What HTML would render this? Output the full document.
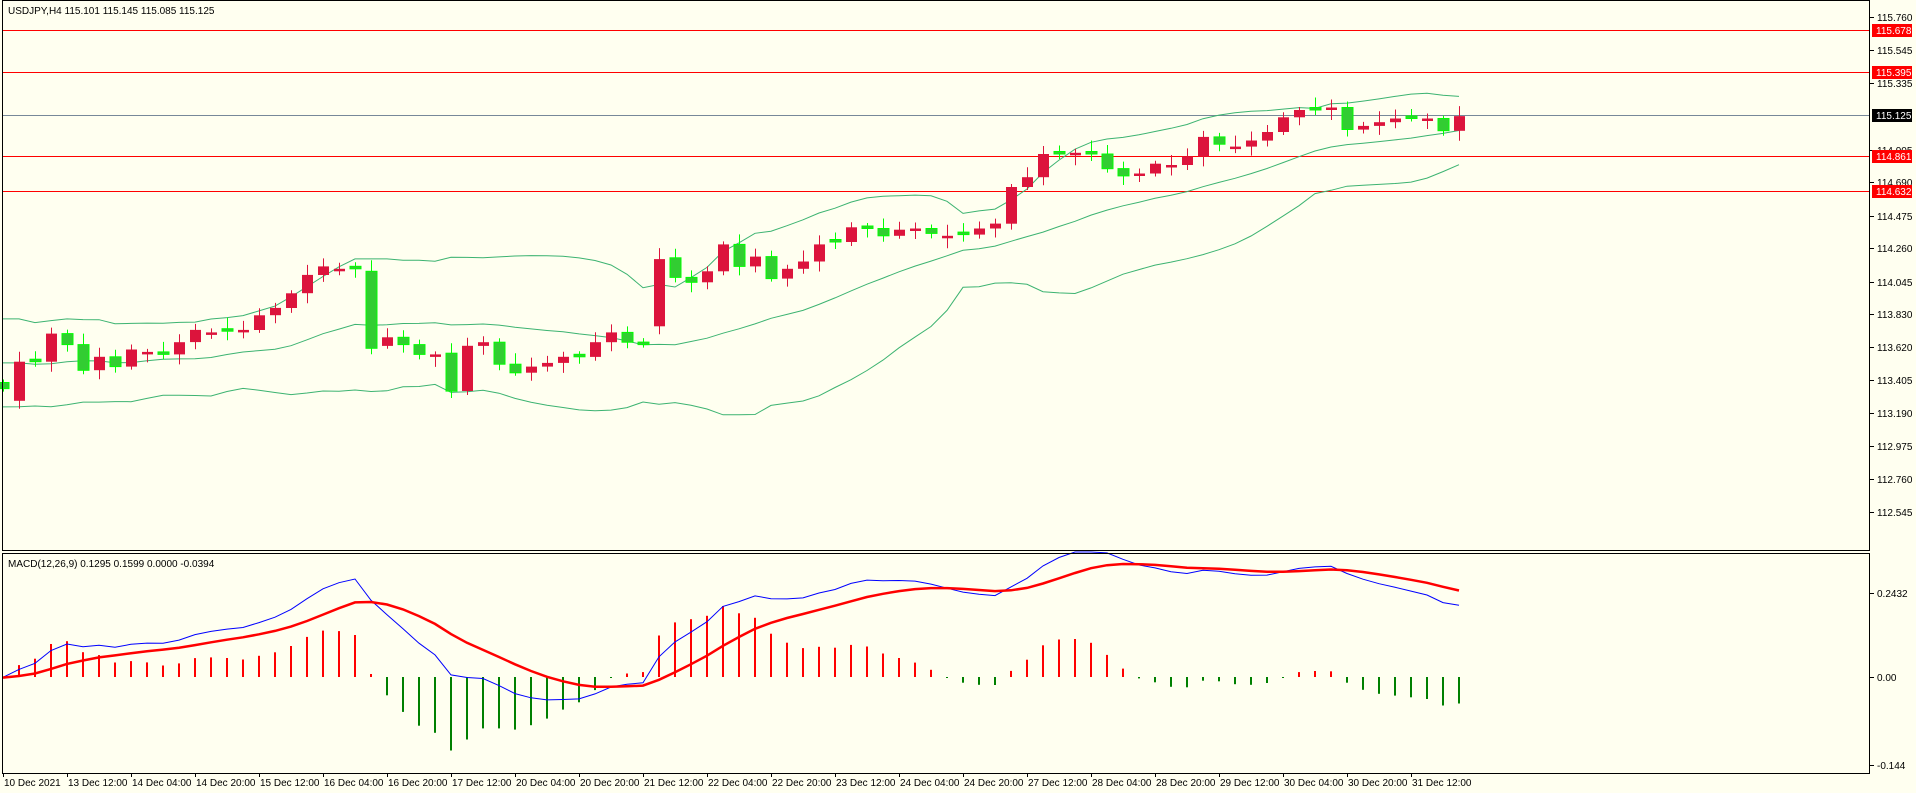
<!DOCTYPE html>
<html><head><meta charset="utf-8"><style>
html,body{margin:0;padding:0;background:#fffff0;width:1916px;height:793px;overflow:hidden}
svg{display:block}
text{font-family:"Liberation Sans",sans-serif;font-size:10px;fill:#000}
</style></head><body>
<svg id="s" width="1916" height="793" xmlns="http://www.w3.org/2000/svg">
<rect x="0" y="0" width="1916" height="793" fill="#fffff0"/>
<g id="g"></g>
<rect x="2.5" y="0.5" width="1867" height="550" fill="none" stroke="#000"/>
<rect x="2.5" y="553.5" width="1867" height="220" fill="none" stroke="#000"/>
<text x="8" y="14">USDJPY,H4  115.101 115.145 115.085 115.125</text>
<text x="8" y="567">MACD(12,26,9) 0.1295 0.1599 0.0000 -0.0394</text>
</svg>
<script>
(function(){
var g=document.getElementById('g');var h='';
function P(p){return 17+(115.76-p)*154;}
function Y(y){return y*1.222;}
var d=[318,296,296,273,282,303,292,300,286,288,290,280,270,272,271,270,258,252,240,225,218,220,220,285,276,282,290,290,320,283,280,298,305,300,297,292,292,280,272,280,282,212,227,231,222,200,218,210,228,220,214,200,198,186,187,193,188,187,191,193,192,187,183,153,145,126,126,125,126,138,144,142,134,135,128,112,118,120,115,108,96,90,90,88,106,103,100,97,97,97,107,95];
var op={0:313,1:328,23:222,24:283,28:289,29:320,41:267,42:211,63:183,84:88};
var cl=[],o=[];
for(var i=0;i<d.length;i++){var c=Y(d[i]);var oo=(op[i]!==undefined)?Y(op[i]):(i?cl[i-1]:c);if(Math.abs(oo-c)<3)oo=c+(i%2?2.5:-2.5);cl.push(c);o.push(oo);}
[30,72,156,191].forEach(function(a){h+='<line x1="3" x2="1870" y1="'+(a+.5)+'" y2="'+(a+.5)+'" stroke="#ff0000"/>';});
h+='<line x1="3" x2="1870" y1="115.5" y2="115.5" stroke="#778899"/>';
var pr=cl.map(function(y){return 115.76-(y-17)/154;});
var up=[],mid=[],lo=[];
var ext=[];for(var k=0;k<19;k++)ext.push(113.52+0.2*Math.sin(k*1.3));
var all=ext.concat(pr);
for(var i=0;i<pr.length;i++){var s=0,j;for(j=0;j<20;j++)s+=all[i+19-j];var m=s/20,v=0;for(j=0;j<20;j++)v+=Math.pow(all[i+19-j]-m,2);var sd=Math.sqrt(v/20);mid.push(m);up.push(m+2*sd);lo.push(m-2*sd);}
function poly(a,c){var s='';for(var i=0;i<a.length;i++)s+=(3+16*i)+','+P(a[i]).toFixed(1)+' ';return '<polyline points="'+s+'" fill="none" stroke="'+c+'" stroke-width="1"/>';}
h+=poly(up,'#3cb371')+poly(mid,'#3cb371')+poly(lo,'#3cb371');
for(var i=0;i<cl.length;i++){var x=3+16*i,c=cl[i],oo=o[i];var tp=Math.min(c,oo),bt=Math.max(c,oo);var bull=c<oo;var col=bull?'#dc143c':'#32cd32';var wc=bull?'#dc143c':'#00ff00';
var wt=tp-3-((i*7)%9),wb=bt+3+((i*5)%8);
h+='<line x1="'+(x+.5)+'" x2="'+(x+.5)+'" y1="'+wt.toFixed(1)+'" y2="'+wb.toFixed(1)+'" stroke="'+wc+'"/>';
h+='<rect x="'+(x-5)+'" y="'+tp.toFixed(1)+'" width="11" height="'+Math.max(2,bt-tp).toFixed(1)+'" fill="'+col+'"'+(bull?'':' stroke="#00ff00"')+'/>';}
var e12=pr[0],e26=pr[0],mac=[],sig=[],sg=null;
var warm=[];for(var k=0;k<40;k++)warm.push(pr[0]+0.01*Math.sin(k/3));
var seq=warm.concat(pr);
for(var i=0;i<seq.length;i++){e12+=(seq[i]-e12)*2/13;e26+=(seq[i]-e26)*2/27;var mm=e12-e26;sg=(sg===null)?mm:sg+(mm-sg)*2/10;if(i>=40){mac.push(mm);sig.push(sg);}}
function MY(v){return 677-v*560;}
for(var i=0;i<mac.length;i++){var x=3+16*i,dv=(mac[i]-sig[i])*1.8;var y=Math.min(770,MY(dv));h+='<rect x="'+(x-1)+'" y="'+Math.min(y,677).toFixed(1)+'" width="2" height="'+Math.max(1,Math.abs(677-y)).toFixed(1)+'" fill="'+(dv>=0?'#ff0000':'#008000')+'"/>';}
function mpoly(a,c,w){var s='';for(var i=0;i<a.length;i++)s+=(3+16*i)+','+Math.max(552,MY(a[i])).toFixed(1)+' ';return '<polyline points="'+s+'" fill="none" stroke="'+c+'" stroke-width="'+w+'"/>';}
h+=mpoly(mac,'#0000ff',1)+mpoly(sig,'#ff0000',2.5);
var ax=[[17,'115.760'],[50,'115.545'],[83,'115.335'],[150,'114.905'],[182,'114.690'],[216,'114.475'],[248,'114.260'],[282,'114.045'],[314,'113.830'],[347,'113.620'],[380,'113.405'],[413,'113.190'],[446,'112.975'],[479,'112.760'],[512,'112.545']];
ax.forEach(function(a){h+='<line x1="1870" x2="1874" y1="'+(a[0]+.5)+'" y2="'+(a[0]+.5)+'" stroke="#000"/><text x="1877" y="'+(a[0]+4)+'">'+a[1]+'</text>';});
[[30,'115.678','#ff0000'],[72,'115.395','#ff0000'],[115,'115.125','#000'],[156,'114.861','#ff0000'],[191,'114.632','#ff0000']].forEach(function(a){h+='<rect x="1872" y="'+(a[0]-6)+'" width="40" height="13" fill="'+a[2]+'"/><text x="1876" y="'+(a[0]+4)+'" style="fill:#fff">'+a[1]+'</text>';});
[[593,'0.2432'],[677,'0.00'],[765,'-0.144']].forEach(function(a){h+='<line x1="1870" x2="1874" y1="'+(a[0]+.5)+'" y2="'+(a[0]+.5)+'" stroke="#000"/><text x="1877" y="'+(a[0]+4)+'">'+a[1]+'</text>';});
var dt=['10 Dec 2021','13 Dec 12:00','14 Dec 04:00','14 Dec 20:00','15 Dec 12:00','16 Dec 04:00','16 Dec 20:00','17 Dec 12:00','20 Dec 04:00','20 Dec 20:00','21 Dec 12:00','22 Dec 04:00','22 Dec 20:00','23 Dec 12:00','24 Dec 04:00','24 Dec 20:00','27 Dec 12:00','28 Dec 04:00','28 Dec 20:00','29 Dec 12:00','30 Dec 04:00','30 Dec 20:00','31 Dec 12:00'];
dt.forEach(function(t,i){var x=3+64*i;h+='<line x1="'+(x+.5)+'" x2="'+(x+.5)+'" y1="773" y2="777" stroke="#000"/><text x="'+(x+1)+'" y="786">'+t+'</text>';});
g.innerHTML=h;
})();
</script>
</body></html>
